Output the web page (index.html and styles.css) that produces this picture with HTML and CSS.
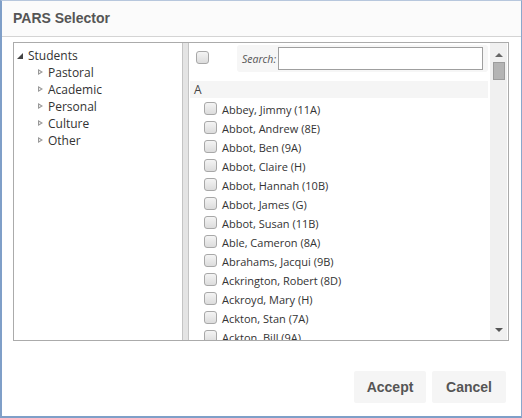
FILE: index.html
```html
<!DOCTYPE html>
<html>
<head>
<meta charset="utf-8">
<link rel="stylesheet" href="styles.css">
</head>
<body>
<div class="window">
  <div class="titlebar">PARS Selector</div>
  <div class="content">
    <div class="box">
      <div class="tree">
        <div class="node root"><span class="tri open"></span>Students</div>
        <div class="children">
          <div class="node"><span class="tri"></span>Pastoral</div>
          <div class="node"><span class="tri"></span>Academic</div>
          <div class="node"><span class="tri"></span>Personal</div>
          <div class="node"><span class="tri"></span>Culture</div>
          <div class="node"><span class="tri"></span>Other</div>
        </div>
      </div>
      <div class="splitter"></div>
      <div class="listpane">
        <div class="listmain">
          <div class="toolbar">
            <span class="cb allcb"></span>
            <div class="searchbox"><span class="slabel">Search:</span><span class="sinput"></span></div>
          </div>
          <div class="group">A</div>
          <div class="items">
            <div class="item"><span class="cb"></span>Abbey, Jimmy (11A)</div>
            <div class="item"><span class="cb"></span>Abbot, Andrew (8E)</div>
            <div class="item"><span class="cb"></span>Abbot, Ben (9A)</div>
            <div class="item"><span class="cb"></span>Abbot, Claire (H)</div>
            <div class="item"><span class="cb"></span>Abbot, Hannah (10B)</div>
            <div class="item"><span class="cb"></span>Abbot, James (G)</div>
            <div class="item"><span class="cb"></span>Abbot, Susan (11B)</div>
            <div class="item"><span class="cb"></span>Able, Cameron (8A)</div>
            <div class="item"><span class="cb"></span>Abrahams, Jacqui (9B)</div>
            <div class="item"><span class="cb"></span>Ackrington, Robert (8D)</div>
            <div class="item"><span class="cb"></span>Ackroyd, Mary (H)</div>
            <div class="item"><span class="cb"></span>Ackton, Stan (7A)</div>
            <div class="item"><span class="cb"></span>Ackton, Bill (9A)</div>
          </div>
        </div>
        <div class="scrollbar">
          <span class="arrow up"></span>
          <span class="thumb"></span>
          <span class="track"></span>
          <span class="arrow down"></span>
        </div>
      </div>
    </div>
  </div>
  <div class="footer">
    <button class="btn accept">Accept</button>
    <button class="btn cancel">Cancel</button>
  </div>
</div>
</body>
</html>
```
FILE: styles.css
```css
* { box-sizing: border-box; }
html, body { margin: 0; padding: 0; background: #fff; }
body { width: 522px; height: 418px; overflow: hidden; }

.window {
  width: 522px;
  height: 418px;
  border: 1px solid #b7c7dd;
  border-left: 2px solid #7f9fc8;
  border-bottom: 2px solid #7f9fc8;
  border-right: 1px solid #8aa7cc;
  display: flex;
  flex-direction: column;
  background: #fff;
}

.titlebar {
  height: 36px;
  flex: none;
  padding-left: 11px;
  line-height: 34px;
  font-family: "Liberation Sans", Arial, sans-serif;
  font-weight: bold;
  font-size: 14px;
  color: #555;
  background: #fbfbfb;
  border-bottom: 1px solid #d4d4d4;
}

.content {
  flex: none;
  padding: 5px 12px 0 11px;
}

.box {
  height: 299px;
  border: 1px solid #ababab;
  display: flex;
  font-family: "Open Sans", "Noto Sans", sans-serif;
  color: #333;
  overflow: hidden;
}

.tree {
  width: 168px;
  flex: none;
  padding: 4px 0 0 2px;
  font-size: 12px;
}
.node {
  height: 17px;
  line-height: 17px;
  display: flex;
  align-items: center;
}
.children { padding-left: 20px; }
.tri {
  width: 12px;
  height: 17px;
  display: inline-block;
  position: relative;
}
.tri::before {
  content: "";
  position: absolute;
  left: 2px;
  top: 5px;
  border-left: 5px solid #999;
  border-top: 3.5px solid transparent;
  border-bottom: 3.5px solid transparent;
}
.tri:not(.open)::after {
  content: "";
  position: absolute;
  left: 3px;
  top: 7px;
  border-left: 2.5px solid #fff;
  border-top: 1.5px solid transparent;
  border-bottom: 1.5px solid transparent;
}
.tri.open::before {
  left: 1px;
  top: 6px;
  border: none;
  width: 0; height: 0;
  border-bottom: 6px solid #444;
  border-left: 6px solid transparent;
}

.splitter {
  width: 7px;
  flex: none;
  background: #e4e4e4;
  border-left: 1px solid #c4c4c4;
  border-right: 1px solid #c4c4c4;
}

.listpane {
  flex: 1;
  display: flex;
  min-width: 0;
}
.listmain {
  flex: 1;
  min-width: 0;
  padding-left: 1px;
}
.toolbar {
  height: 38px;
  display: flex;
  align-items: flex-start;
  padding-top: 2px;
}
.cb {
  width: 13px;
  height: 13px;
  flex: none;
  border: 1px solid #a8a8a8;
  border-radius: 3px;
  background: linear-gradient(#f4f4f4, #dcdcdc);
  display: inline-block;
}
.allcb {
  margin: 6px 0 0 6px;
}
.searchbox {
  margin-left: 28px;
  width: 251px;
  height: 27px;
  background: #f6f6f6;
  border-radius: 3px;
  display: flex;
  align-items: center;
  padding-left: 5px;
}
.slabel {
  font-style: italic;
  font-size: 10.5px;
  color: #555;
  width: 36px;
  flex: none;
}
.sinput {
  width: 205px;
  height: 23px;
  border: 1px solid #9f9f9f;
  background: #fff;
  margin-top: -1px;
}
.group {
  height: 17px;
  margin-right: 2px;
  background: #f5f5f5;
  font-size: 12px;
  line-height: 17px;
  padding-left: 4px;
  color: #444;
}
.items { padding-top: 2px; }
.item {
  height: 19px;
  display: flex;
  align-items: center;
  font-size: 11px;
  color: #333;
  padding-left: 14px;
  white-space: nowrap;
}
.item .cb { margin-right: 5px; margin-top: -2px; }

.scrollbar {
  width: 17px;
  flex: none;
  background: #f0f0f0;
  display: flex;
  flex-direction: column;
  align-items: center;
  margin-right: 1px;
}
.arrow {
  width: 0; height: 0;
  border-left: 4px solid transparent;
  border-right: 4px solid transparent;
}
.arrow.up { border-bottom: 4px solid #666; margin-top: 10px; }
.arrow.down { border-top: 4px solid #555; margin-bottom: 8px; }
.thumb {
  width: 12px;
  height: 18px;
  margin-top: 5px;
  background: #b4b4b4;
  border: 1px solid #9c9c9c;
}
.track { flex: 1; }

.footer {
  flex: 1;
  display: flex;
  justify-content: flex-end;
  align-items: flex-start;
  padding: 30px 15px 0 0;
  gap: 6px;
}
.btn {
  height: 32px;
  border: none;
  border-radius: 2px;
  background: #f5f5f5;
  font-family: "Liberation Sans", Arial, sans-serif;
  font-weight: bold;
  font-size: 14px;
  color: #555;
  padding: 0;
}
.accept { width: 72px; }
.cancel { width: 74px; }
```
